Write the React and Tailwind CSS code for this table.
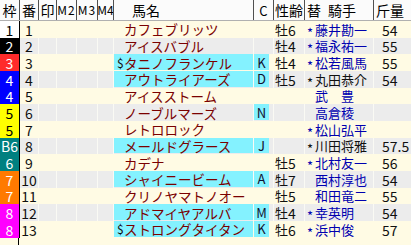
import React from "react";

const waku = {
  1: "bg-white text-black",
  2: "bg-black text-white",
  3: "bg-[#ff2a2a] text-white",
  4: "bg-[#0000ff] text-white",
  5: "bg-[#ffff00] text-black",
  6: "bg-[#008080] text-white",
  7: "bg-[#ff7a00] text-white",
  8: "bg-[#ff00ff] text-white",
};

const BLUE = "text-[#0000b0]";
const BLACK = "text-[#101010]";
const NUM = { fontFamily: '"Liberation Sans Narrow", "Noto Sans CJK JP", sans-serif' };

const rows = [
  { w: 1, wl: "1", n: 1, mark: " ", name: "カフェブリッツ", cyan: false, c: "", age: "6", jm: "*", j: "藤井勘一", jc: BLUE, kg: "54" },
  { w: 2, wl: "2", n: 2, mark: " ", name: "アイスバブル", cyan: false, c: "", age: "4", jm: "*", j: "福永祐一", jc: BLUE, kg: "55" },
  { w: 3, wl: "3", n: 3, mark: "$", name: "タニノフランケル", cyan: true, c: "K", age: "4", jm: "*", j: "松若風馬", jc: BLUE, kg: "55" },
  { w: 4, wl: "4", n: 4, mark: " ", name: "アウトライアーズ", cyan: true, c: "D", age: "5", jm: "*", j: "丸田恭介", jc: BLACK, kg: "54" },
  { w: 4, wl: "4", n: 5, mark: " ", name: "アイスストーム", cyan: false, c: "", age: "", jm: " ", j: "武　豊", jc: BLUE, kg: "" },
  { w: 5, wl: "5", n: 6, mark: " ", name: "ノーブルマーズ", cyan: false, c: "N", age: "", jm: " ", j: "高倉稜", jc: BLUE, kg: "" },
  { w: 5, wl: "5", n: 7, mark: " ", name: "レトロロック", cyan: false, c: "", age: "", jm: "*", j: "松山弘平", jc: BLUE, kg: "" },
  { w: 6, wl: "B6", n: 8, mark: " ", name: "メールドグラース", cyan: true, c: "J", age: "", jm: "*", j: "川田将雅", jc: BLACK, kg: "57.5" },
  { w: 6, wl: "6", n: 9, mark: " ", name: "カデナ", cyan: false, c: "", age: "5", jm: "*", j: "北村友一", jc: BLUE, kg: "56" },
  { w: 7, wl: "7", n: 10, mark: " ", name: "シャイニービーム", cyan: true, c: "A", age: "7", jm: " ", j: "西村淳也", jc: BLUE, kg: "54" },
  { w: 7, wl: "7", n: 11, mark: " ", name: "クリノヤマトノオー", cyan: false, c: "", age: "5", jm: " ", j: "和田竜二", jc: BLUE, kg: "55" },
  { w: 8, wl: "8", n: 12, mark: " ", name: "アドマイヤアルバ", cyan: true, c: "M", age: "4", jm: "*", j: "幸英明", jc: BLUE, kg: "54" },
  { w: 8, wl: "8", n: 13, mark: "$", name: "ストロングタイタン", cyan: true, c: "K", age: "6", jm: "*", j: "浜中俊", jc: BLUE, kg: "57" },
];

function HeaderCell({ className, children }) {
  return (
    <div className={`flex h-full items-center border-l border-[#505050] ${className}`}>
      {children}
    </div>
  );
}

function Row({ r, even }) {
  const bg = even ? "bg-[#ececec]" : "bg-[#fffbe4]";
  const sep = even ? "border-[#fafaf4]" : "border-[#fffbe4]";
  return (
    <div className={`flex h-[16.67px] leading-[14px] ${bg}`}>
      <div
        className={`flex w-[19px] shrink-0 items-center justify-center pt-[1px] text-[14px] ${waku[r.w]}`}
        style={NUM}
      >
        {r.wl}
      </div>
      <div
        className="flex w-[19px] shrink-0 items-center justify-center border-l border-black pt-[1px] text-[14px]"
        style={NUM}
      >
        {r.n}
      </div>
      <div className={`w-[18px] shrink-0 border-l ${sep}`} />
      <div className={`w-[20px] shrink-0 border-l ${sep}`} />
      <div className={`w-[21px] shrink-0 border-l ${sep}`} />
      <div className={`w-[16px] shrink-0 border-l ${sep}`} />
      <div className={`flex w-[140px] shrink-0 border-l ${sep}`}>
        <div
          className={`flex h-[15.67px] w-[139px] items-center pl-[3px] pt-[1px] text-[13.5px] text-[#7a0000] ${
            r.cyan ? "bg-[#84f2ff]" : ""
          }`}
        >
          <span className="w-[7px] shrink-0 text-[12px] text-[#101010]">{r.mark === "$" ? "$" : ""}</span>
          <span>{r.name}</span>
        </div>
      </div>
      <div className={`flex w-[20px] shrink-0 border-l ${sep}`}>
        {r.c && (
          <div className="flex h-[15.67px] w-[15px] items-center justify-center bg-[#84f2ff] pt-[1px] text-[13px] text-[#101030]">
            {r.c}
          </div>
        )}
      </div>
      <div className={`flex w-[31px] shrink-0 items-center border-l pl-[1px] pt-[1px] ${sep}`}>
        {r.age && (
          <>
            <span>牡</span>
            <span className="text-[14px]" style={NUM}>
              {r.age}
            </span>
          </>
        )}
      </div>
      <div className={`flex w-[69px] shrink-0 items-center border-l pl-[2px] pt-[1px] ${sep} ${r.jc}`}>
        <span className="w-[8px] shrink-0 translate-y-[3px] text-[13px]" style={NUM}>
          {r.jm === "*" ? "*" : ""}
        </span>
        <span>{r.j}</span>
      </div>
      <div
        className={`flex w-[38px] shrink-0 items-center border-l pl-[8px] pt-[1px] text-[14px] ${sep}`}
        style={NUM}
      >
        {r.kg}
      </div>
    </div>
  );
}

export default function App() {
  return (
    <div
      className="flex h-[245px] w-[411px] flex-col overflow-hidden bg-[#fffbe4] text-[13px] leading-none text-[#101010]"
      style={{ fontFamily: '"Noto Sans CJK JP", "Noto Sans", sans-serif' }}
    >
      <div className="flex h-[21px] shrink-0 border-b border-[#b0b0b0] bg-[#fbfbfb] text-[14px] text-black">
        <div className="flex h-full w-[19px] shrink-0 items-center justify-center">枠</div>
        <HeaderCell className="w-[19px] justify-center">番</HeaderCell>
        <HeaderCell className="w-[18px] justify-center">印</HeaderCell>
        <HeaderCell className="w-[20px] justify-center text-[12px] tracking-[1px]">M2</HeaderCell>
        <HeaderCell className="w-[21px] justify-center text-[12px] tracking-[1px]">M3</HeaderCell>
        <HeaderCell className="w-[16px] justify-center text-[12px]">M4</HeaderCell>
        <HeaderCell className="w-[140px] pl-[18px]">馬名</HeaderCell>
        <HeaderCell className="w-[20px] justify-center text-[13px]">C</HeaderCell>
        <HeaderCell className="w-[31px] justify-center">性齢</HeaderCell>
        <HeaderCell className="w-[69px] pl-[2px]">
          替<span className="ml-[7px]">騎手</span>
        </HeaderCell>
        <HeaderCell className="w-[38px] pl-[2px]">斤量</HeaderCell>
      </div>
      {rows.map((r, i) => (
        <Row key={r.n} r={r} even={i % 2 === 1} />
      ))}
      <div className="flex flex-1">
        <div className="w-[19px] border-r border-black" />
      </div>
    </div>
  );
}
